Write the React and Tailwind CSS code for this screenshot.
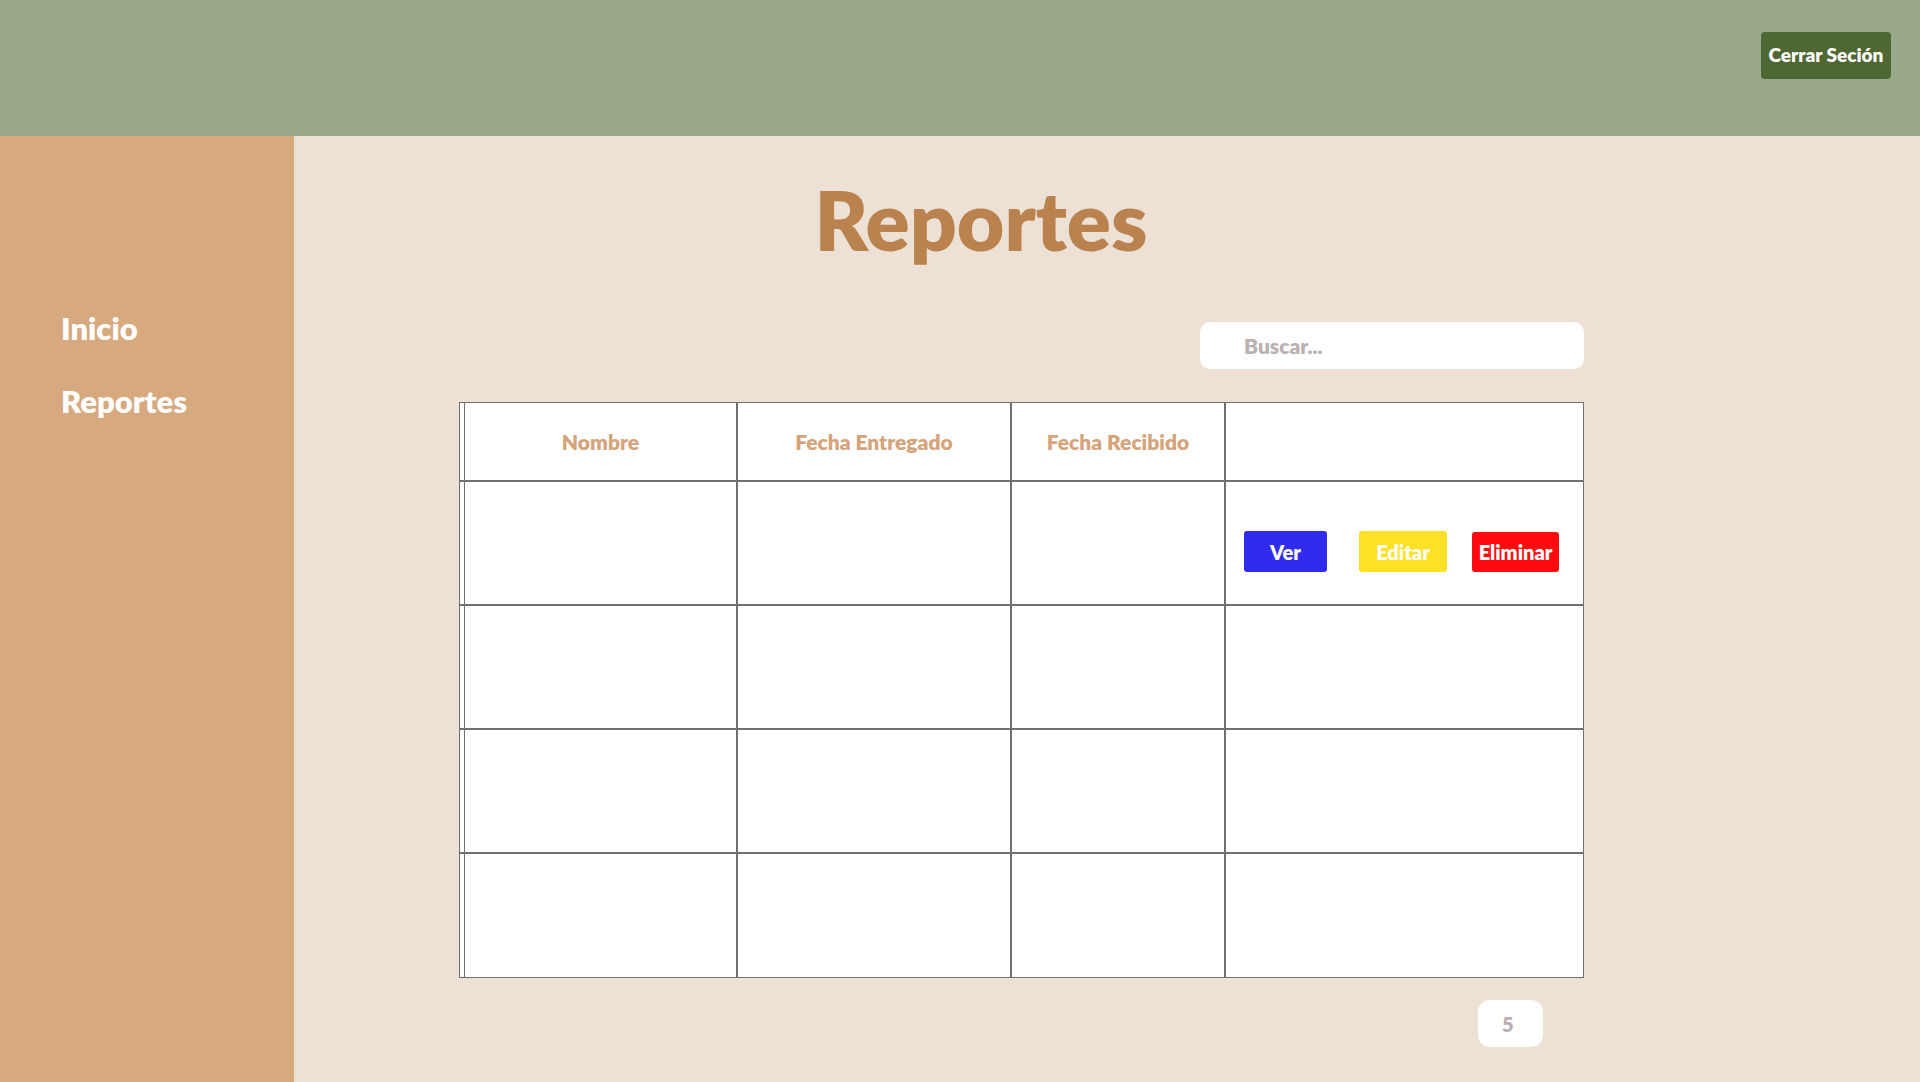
import React from "react";

const rows = [
  { nombre: "", entregado: "", recibido: "", acciones: true },
  { nombre: "", entregado: "", recibido: "", acciones: false },
  { nombre: "", entregado: "", recibido: "", acciones: false },
  { nombre: "", entregado: "", recibido: "", acciones: false },
];

const gridCols = "grid grid-cols-[5px_273px_274px_214px_357px]";

function Header() {
  return (
    <header className="h-[136px] bg-[#99a889] flex justify-end items-start pt-[32px] pr-[29px] shrink-0">
      <button className="w-[130px] h-[47px] rounded-[4px] bg-[#4f6733] text-white text-[19px] font-extrabold">
        Cerrar Seción
      </button>
    </header>
  );
}

function Sidebar() {
  return (
    <aside className="w-[294px] shrink-0 bg-[#d6a97f] pt-[174px] pl-[61px]">
      <nav className="flex flex-col gap-[36px]">
        <a href="#" className="text-white text-[31px] leading-[37px] font-extrabold">Inicio</a>
        <a href="#" className="text-white text-[31px] leading-[37px] font-extrabold">Reportes</a>
      </nav>
    </aside>
  );
}

function ReportTable() {
  return (
    <div className="border border-[#707070] bg-white w-[1125px]">
      <div className={gridCols}>
        <div className="h-[79px] border-r border-b-2 border-[#707070]" />
        <div className="h-[79px] border-r-2 border-b-2 border-[#707070] flex items-center justify-center text-[21px] font-extrabold text-[#d5a47a]">Nombre</div>
        <div className="h-[79px] border-r-2 border-b-2 border-[#707070] flex items-center justify-center text-[21px] font-extrabold text-[#d5a47a]">Fecha Entregado</div>
        <div className="h-[79px] border-r-2 border-b-2 border-[#707070] flex items-center justify-center text-[21px] font-extrabold text-[#d5a47a]">Fecha Recibido</div>
        <div className="h-[79px] border-b-2 border-[#707070]" />
      </div>

      {rows.map((r, i) => {
        const last = i === rows.length - 1;
        return (
          <div key={i} className={gridCols}>
            <div className={last ? "h-[123px] border-r border-[#707070]" : "h-[124px] border-r border-b-2 border-[#707070]"} />
            <div className={last ? "h-[123px] border-r-2 border-[#707070]" : "h-[124px] border-r-2 border-b-2 border-[#707070]"}>{r.nombre}</div>
            <div className={last ? "h-[123px] border-r-2 border-[#707070]" : "h-[124px] border-r-2 border-b-2 border-[#707070]"}>{r.entregado}</div>
            <div className={last ? "h-[123px] border-r-2 border-[#707070]" : "h-[124px] border-r-2 border-b-2 border-[#707070]"}>{r.recibido}</div>
            <div className={last ? "h-[123px]" : "h-[124px] border-b-2 border-[#707070]"}>
              {r.acciones && (
                <div className="flex items-start pt-[49px] pl-[18px]">
                  <button className="w-[83px] h-[41px] rounded-[3px] bg-[#302bed] text-white text-[20px] font-extrabold">Ver</button>
                  <button className="ml-[32px] w-[88px] h-[41px] rounded-[3px] bg-[#fde127] text-white text-[20px] font-extrabold">Editar</button>
                  <button className="ml-[25px] w-[87px] h-[40px] mt-[1px] rounded-[3px] bg-[#ff0a0e] text-white text-[20px] font-extrabold">Eliminar</button>
                </div>
              )}
            </div>
          </div>
        );
      })}
    </div>
  );
}

export default function App() {
  return (
    <div className="min-h-screen flex flex-col bg-[#ede0d4] font-['Lato','Open_Sans',sans-serif]">
      <Header />
      <div className="flex flex-1">
        <Sidebar />
        <main className="flex-1 pl-[165px]">
          <div className="w-[1125px] flex flex-col">
            <h1 className="mt-[35px] w-[1044px] text-center text-[82px] leading-[96px] font-extrabold text-[#b9824e]">
              Reportes
            </h1>

            <div className="mt-[55px] flex justify-end">
              <input
                type="text"
                placeholder="Buscar..."
                className="w-[384px] h-[47px] rounded-[10px] bg-white pl-[44px] text-[21px] font-extrabold text-[#6b6b6b] placeholder:text-[#bab1b1] outline-none"
              />
            </div>

            <div className="mt-[33px]">
              <ReportTable />
            </div>

            <div className="mt-[22px] flex justify-end pr-[41px] pb-[37px]">
              <div className="w-[65px] h-[47px] rounded-[12px] bg-white flex items-center pl-[24px] text-[20px] font-extrabold text-[#b9aeb1]">
                5
              </div>
            </div>
          </div>
        </main>
      </div>
    </div>
  );
}
